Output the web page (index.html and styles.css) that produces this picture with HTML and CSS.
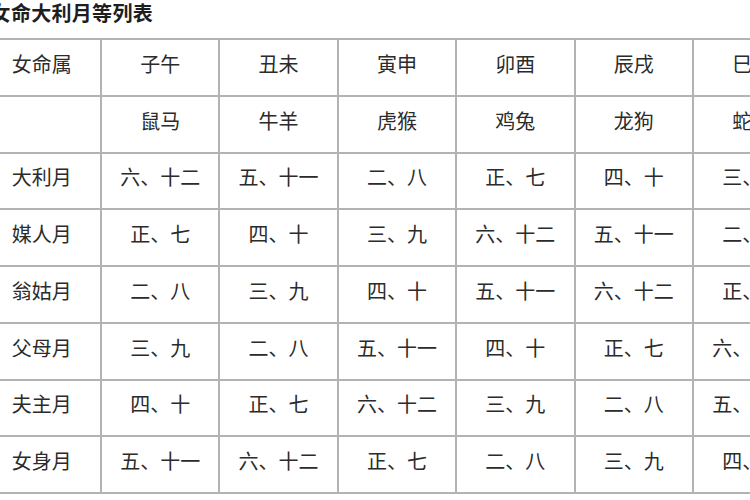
FILE: index.html
```html
<!DOCTYPE html>
<html lang="zh-CN">
<head>
<meta charset="utf-8">
<title>女命大利月等列表</title>
<link rel="stylesheet" href="styles.css">
</head>
<body>
<div class="page">
  <h1 class="title">女命大利月等列表</h1>
  <div class="grid">
    <div class="cell">女命属</div><div class="cell">子午</div><div class="cell">丑未</div><div class="cell">寅申</div><div class="cell">卯酉</div><div class="cell">辰戌</div><div class="cell">巳亥</div>
    <div class="cell"></div><div class="cell">鼠马</div><div class="cell">牛羊</div><div class="cell">虎猴</div><div class="cell">鸡兔</div><div class="cell">龙狗</div><div class="cell">蛇猪</div>
    <div class="cell">大利月</div><div class="cell">六、十二</div><div class="cell">五、十一</div><div class="cell">二、八</div><div class="cell">正、七</div><div class="cell">四、十</div><div class="cell">三、九</div>
    <div class="cell">媒人月</div><div class="cell">正、七</div><div class="cell">四、十</div><div class="cell">三、九</div><div class="cell">六、十二</div><div class="cell">五、十一</div><div class="cell">二、八</div>
    <div class="cell">翁姑月</div><div class="cell">二、八</div><div class="cell">三、九</div><div class="cell">四、十</div><div class="cell">五、十一</div><div class="cell">六、十二</div><div class="cell">正、七</div>
    <div class="cell">父母月</div><div class="cell">三、九</div><div class="cell">二、八</div><div class="cell">五、十一</div><div class="cell">四、十</div><div class="cell">正、七</div><div class="cell">六、十二</div>
    <div class="cell">夫主月</div><div class="cell">四、十</div><div class="cell">正、七</div><div class="cell">六、十二</div><div class="cell">三、九</div><div class="cell">二、八</div><div class="cell">五、十一</div>
    <div class="cell">女身月</div><div class="cell">五、十一</div><div class="cell">六、十二</div><div class="cell">正、七</div><div class="cell">二、八</div><div class="cell">三、九</div><div class="cell">四、十</div>
  </div>
</div>
</body>
</html>
```

FILE: styles.css
```css
html, body {
  margin: 0;
  padding: 0;
  background: #ffffff;
  overflow: hidden;
}
body {
  width: 750px;
  height: 500px;
  font-family: "Noto Sans CJK SC", "Noto Sans", sans-serif;
  color: #2b2b2b;
}
.page {
  margin-left: -18.4px;
}
.title {
  margin: 0 0 0 9px;
  height: 38px;
  font-size: 20px;
  line-height: 26px;
  font-weight: 700;
  color: #1e1e1e;
  letter-spacing: 0.3px;
  white-space: nowrap;
}
.grid {
  display: grid;
  grid-template-columns: repeat(7, 116.4px);
  grid-auto-rows: 54.75px;
  gap: 2px;
  padding: 2px;
  width: max-content;
  background: #b3b3b3;
}
.cell {
  background: #ffffff;
  display: flex;
  align-items: center;
  justify-content: center;
  padding-bottom: 7px;
  box-sizing: border-box;
  font-size: 20px;
  line-height: 1;
  white-space: nowrap;
}
```
